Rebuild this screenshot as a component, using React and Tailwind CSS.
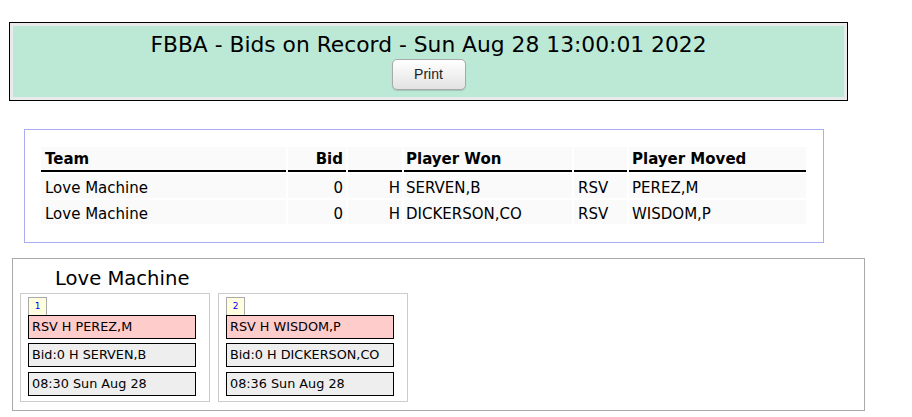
export default function App() {
  const rows = [
    ["Love Machine", "0", "H", "SERVEN,B", "RSV", "PEREZ,M"],
    ["Love Machine", "0", "H", "DICKERSON,CO", "RSV", "WISDOM,P"],
  ];
  const cards = [
    { n: "1", moved: "RSV H PEREZ,M", bid: "Bid:0 H SERVEN,B", time: "08:30 Sun Aug 28" },
    { n: "2", moved: "RSV H WISDOM,P", bid: "Bid:0 H DICKERSON,CO", time: "08:36 Sun Aug 28" },
  ];
  return (
    <div className="w-[912px] h-[417px] bg-white text-black pt-[22px] pl-[9px]" style={{ fontFamily: '"DejaVu Sans", Verdana, sans-serif' }}>
      <div className="w-[839px] h-[79px] border border-black bg-[#e8ebe9] p-[3px]">
        <div className="h-full bg-[#bbe9d6] flex flex-col items-center pt-[5px]">
          <div className="text-[21.8px] leading-[27px]">FBBA - Bids on Record - Sun Aug 28 13:00:01 2022</div>
          <button className="mt-[1px] w-[74px] h-[31px] rounded-[5px] border border-[#a9a9a9] bg-gradient-to-b from-white to-[#e3e3e3] text-[14px] text-[#222] shadow-[0_1px_1px_rgba(0,0,0,0.15)]" style={{ fontFamily: '"Liberation Sans", Arial, sans-serif' }}>Print</button>
        </div>
      </div>

      <div className="ml-[15px] mt-[28px] w-[800px] h-[114px] border border-[#a9adf2] pl-[14px] pt-[15px]">
        <table className="border-separate border-spacing-[2px] text-[15px]">
          <thead>
            <tr className="font-bold leading-[20px]">
              <th className="w-[245px] h-[25px] p-0 pt-[2px] align-top bg-[#fafafa] border-b-2 border-black text-left pl-[4px]">Team</th>
              <th className="w-[58px] p-0 pt-[2px] align-top bg-[#fafafa] border-b-2 border-black text-right pr-[3px]">Bid</th>
              <th className="w-[54px] p-0 bg-[#fafafa] border-b-2 border-black"></th>
              <th className="w-[168px] p-0 pt-[2px] align-top bg-[#fafafa] border-b-2 border-black text-left pl-[2px]">Player Won</th>
              <th className="w-[53px] p-0 bg-[#fafafa] border-b-2 border-black"></th>
              <th className="w-[177px] p-0 pt-[2px] align-top bg-[#fafafa] border-b-2 border-black text-left pl-[3px]">Player Moved</th>
            </tr>
          </thead>
          <tbody>
            {rows.map((r, i) => (
              <tr key={i} className="h-[24px] leading-[20px]">
                <td className="p-0 pt-[4px] align-top bg-[#fafafa] pl-[4px]">{r[0]}</td>
                <td className="p-0 pt-[4px] align-top bg-[#fafafa] text-right pr-[3px]">{r[1]}</td>
                <td className="p-0 pt-[4px] align-top bg-[#fafafa] text-right pr-[2px]">{r[2]}</td>
                <td className="p-0 pt-[4px] align-top bg-[#fafafa] pl-[2px]">{r[3]}</td>
                <td className="p-0 pt-[4px] align-top bg-[#fafafa] pl-[4px]">{r[4]}</td>
                <td className="p-0 pt-[4px] align-top bg-[#fafafa] pl-[3px]">{r[5]}</td>
              </tr>
            ))}
          </tbody>
        </table>
      </div>

      <div className="ml-[3px] mt-[15px] w-[853px] h-[153px] border border-[#aaaaaa] pl-[7px] pt-[7px]">
        <div className="pl-[35px] text-[19.6px] leading-[26px]">Love Machine</div>
        <div className="flex gap-[8px] mt-[1px]">
          {cards.map((c) => (
            <div key={c.n} className="w-[190px] h-[109px] border border-[#cccccc] pl-[7px] pt-[3px]">
              <div className="w-[19px] h-[18px] border border-b-0 border-[#aaaaaa] bg-[#ffffe0] text-[#0000ff] text-[9px] flex items-center justify-center">{c.n}</div>
              <div className="w-[168px] h-[24px] border border-black bg-[#ffcccc] text-[12.8px] pl-[3px] flex items-center">{c.moved}</div>
              <div className="mt-[4px] w-[168px] h-[24px] border border-black bg-[#eeeeee] text-[12.8px] pl-[3px] flex items-center">{c.bid}</div>
              <div className="mt-[5px] w-[168px] h-[24px] border border-black bg-[#eeeeee] text-[12.8px] pl-[3px] flex items-center">{c.time}</div>
            </div>
          ))}
        </div>
      </div>
    </div>
  );
}
